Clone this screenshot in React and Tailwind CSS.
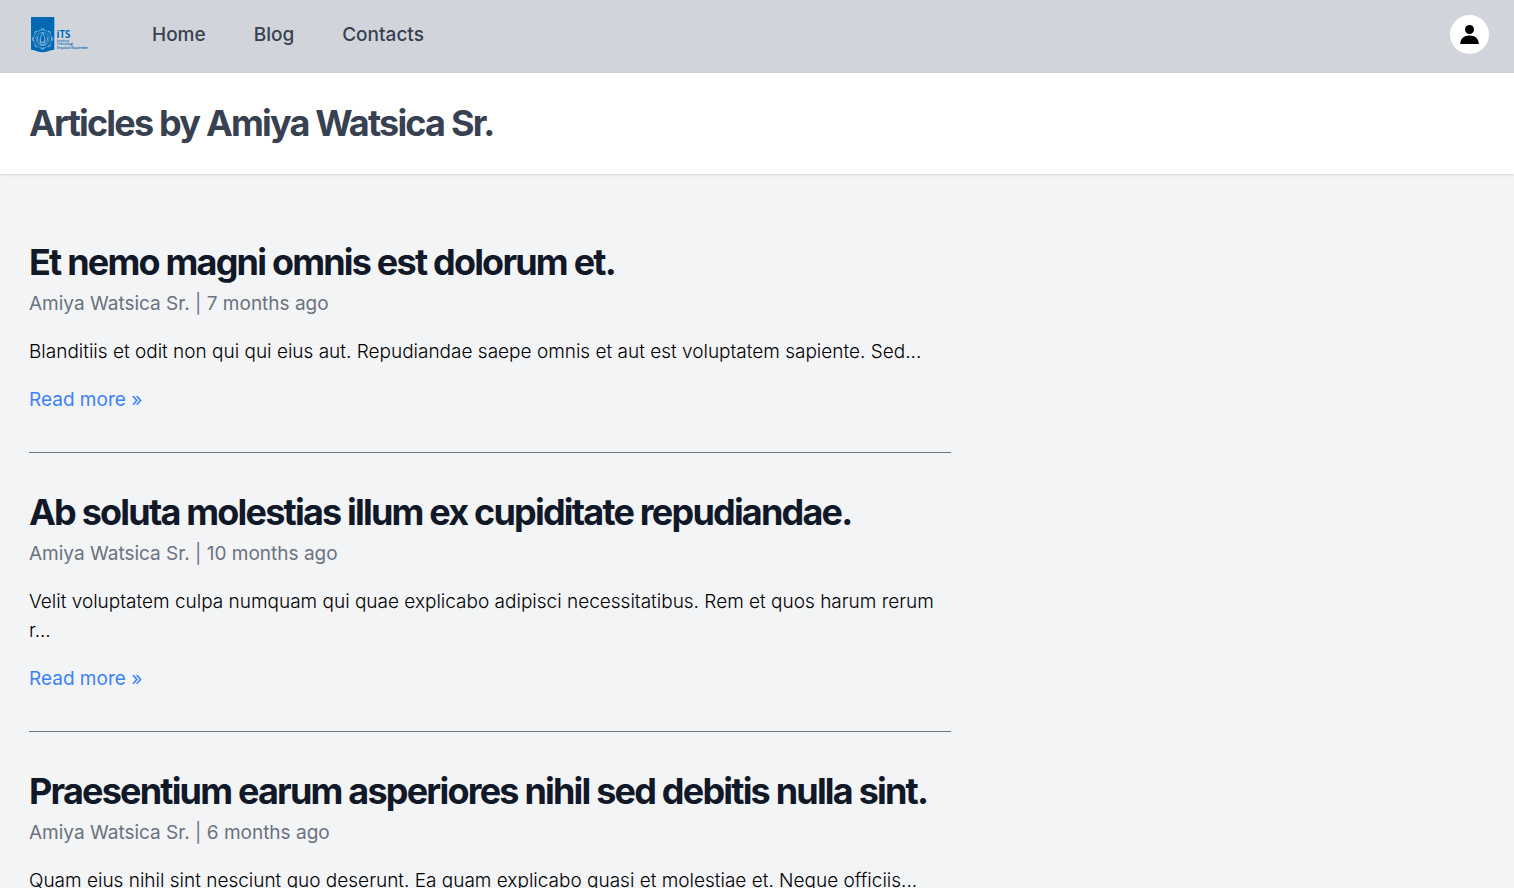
const articles = [
  {
    title: "Et nemo magni omnis est dolorum et.",
    age: "7 months ago",
    excerpt: "Blanditiis et odit non qui qui eius aut. Repudiandae saepe omnis et aut est voluptatem sapiente. Sed...",
  },
  {
    title: "Ab soluta molestias illum ex cupiditate repudiandae.",
    age: "10 months ago",
    excerpt: "Velit voluptatem culpa numquam qui quae explicabo adipisci necessitatibus. Rem et quos harum rerum r...",
  },
  {
    title: "Praesentium earum asperiores nihil sed debitis nulla sint.",
    age: "6 months ago",
    excerpt: "Quam eius nihil sint nesciunt quo deserunt. Ea quam explicabo quasi et molestiae et. Neque officiis...",
  },
];

const teeth = [0, 45, 90, 135, 180, 225, 270, 315];

function Logo() {
  return (
    <svg viewBox="0 0 59 39" className="h-[39px] w-[59px]" role="img" aria-label="ITS">
      <path d="M2 2H25.300V34.800C21 35.200 17 37.300 13.600 37.300C10 37.300 6 35.200 2 34.800Z" fill="#0069b4" />
      <g fill="none" stroke="#a9c9e2" strokeWidth="0.7" transform="translate(1.1 -0.5)">
        <circle cx="12.5" cy="24.500" r="9" strokeDasharray="1.800 0.700" />
        <circle cx="12.5" cy="24.500" r="6.600" strokeWidth="0.500" />
        {teeth.map((a) => (
          <path key={a} d="M11.300 15.800V14.300H13.700V15.800" transform={`rotate(${a} 12.5 24.5)`} />
        ))}
        <path d="M12.500 18L10.500 22.500V28H14.500V22.500ZM8 22C6.500 26 9 29.500 12.500 30C16 29.500 18.500 26 17 22M9 25L12.500 28.500L16 25M9.500 30.500H15.500" />
      </g>
      <g fill="#0069b4" className="font-['Open_Sans',sans-serif]">
        <text x="27.500" y="22.700" fontSize="9.700" className="font-bold">iTS</text>
        <g fontSize="3.500" className="font-semibold">
          <text x="27.700" y="26.500">Institut</text>
          <text x="27.700" y="30">Teknologi</text>
          <text x="27.700" y="33.600">Sepuluh Nopember</text>
        </g>
      </g>
    </svg>
  );
}

function NavBar() {
  return (
    <header className="flex items-start justify-between bg-[#d1d5db] px-[29px] pt-[15px] pb-[19px]">
      <div className="flex h-[39px] items-center gap-16">
        <a href="#home" aria-label="ITS home">
          <Logo />
        </a>
        <nav className="flex gap-12 font-medium text-[#374151]">
          <a href="#home">Home</a>
          <a href="#blog">Blog</a>
          <a href="#contacts">Contacts</a>
        </nav>
      </div>
      <button
        type="button"
        aria-label="Account"
        className="-mr-1 flex size-[39px] items-center justify-center rounded-full bg-white"
      >
        <svg viewBox="0 0 19 19" className="size-[19px]" fill="black" aria-hidden="true">
          <circle cx="9.5" cy="4.500" r="4.500" />
          <path d="M0.200 19C0.200 13.500 4 10.400 9.500 10.400S18.800 13.500 18.800 19Z" />
        </svg>
      </button>
    </header>
  );
}

function Article({ title, age, excerpt }) {
  return (
    <article className="max-w-[922px] border-b border-[#6b7280] py-[38px]">
      <h2 className="mb-[5px] text-4xl/[43px] font-bold tracking-tighter text-[#111827]">{title}</h2>
      <p className="text-[#6b7280]">
        <a href="#author">Amiya Watsica Sr.</a> | {age}
      </p>
      <p className="my-[19px] font-light text-black">{excerpt}</p>
      <a href="#read" className="block text-[#3b82f6]">
        Read more &raquo;
      </a>
    </article>
  );
}

export default function App() {
  return (
    <div className="min-h-screen bg-[#f3f4f6] font-['Inter',sans-serif] text-[19px]/[29px]">
      <NavBar />
      <div className="bg-white px-[29px] py-[29px] shadow-sm">
        <h1 className="text-4xl/[43px] font-bold tracking-tighter text-[#374151]">Articles by Amiya Watsica Sr.</h1>
      </div>
      <main className="px-[29px] py-[29px]">
        {articles.map((article) => (
          <Article key={article.title} {...article} />
        ))}
      </main>
    </div>
  );
}
